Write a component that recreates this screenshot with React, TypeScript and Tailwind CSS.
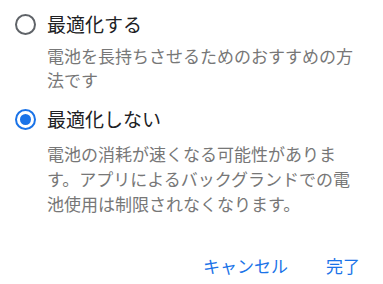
const font = { fontFamily: '"Noto Sans CJK JP", "Noto Sans", sans-serif' };

function Radio({ checked }: { checked: boolean }) {
  return checked ? (
    <span className="flex h-[21px] w-[21px] shrink-0 items-center justify-center rounded-full border-[2.5px] border-[#1a73e8]">
      <span className="h-[11px] w-[11px] rounded-full bg-[#1a73e8]" />
    </span>
  ) : (
    <span className="h-[21px] w-[21px] shrink-0 rounded-full border-[2.5px] border-[#5f6368]" />
  );
}

export default function App() {
  return (
    <div className="h-[284px] w-[383px] overflow-hidden bg-white pt-[10px]" style={font}>
      {/* 最適化する */}
      <div className="flex items-center gap-[11px] pl-[15px]">
        <Radio checked={false} />
        <span className="text-[19px] leading-[28px] text-[#202124]">最適化する</span>
      </div>
      <p className="mt-[6px] w-[363px] pl-[47px] text-[17px] leading-[24px] text-[#777777]">
        電池を長持ちさせるためのおすすめの方法です
      </p>

      {/* 最適化しない */}
      <div className="mt-[13px] flex items-center gap-[11px] pl-[15px]">
        <Radio checked />
        <span className="text-[19px] leading-[28px] text-[#202124]">最適化しない</span>
      </div>
      <p className="mt-[8px] w-[363px] pl-[47px] text-[17px] leading-[25px] text-[#777777]">
        電池の消耗が速くなる可能性があります。アプリによるバックグランドでの電池使用は制限されなくなります。
      </p>

      <div className="mt-[38px] flex justify-end gap-[38px] pr-[23px] text-[17px] leading-[24px] text-[#1a73e8]">
        <span>キャンセル</span>
        <span>完了</span>
      </div>
    </div>
  );
}
